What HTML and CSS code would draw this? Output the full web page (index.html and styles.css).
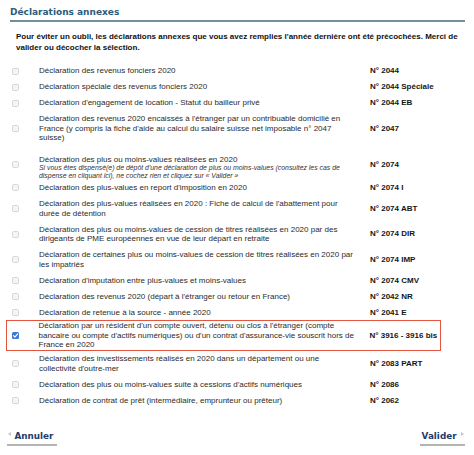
FILE: index.html
```html
<!DOCTYPE html>
<html lang="fr">
<head>
<meta charset="utf-8">
<title>Déclarations annexes</title>
<link rel="stylesheet" href="styles.css">
</head>
<body>
<div class="page">
  <h1 class="title">Déclarations annexes</h1>
  <p class="intro">Pour éviter un oubli, les déclarations annexes que vous avez remplies l'année dernière ont été précochées. Merci de valider ou décocher la sélection.</p>

  <div class="list">
    <div class="row"><span class="box"></span><span class="label">Déclaration des revenus fonciers 2020</span><span class="num">N° 2044</span></div>
    <div class="row"><span class="box"></span><span class="label">Déclaration spéciale des revenus fonciers 2020</span><span class="num">N° 2044 Spéciale</span></div>
    <div class="row"><span class="box"></span><span class="label">Déclaration d'engagement de location - Statut du bailleur privé</span><span class="num">N° 2044 EB</span></div>
    <div class="row"><span class="box"></span><span class="label">Déclaration des revenus 2020 encaissés à l'étranger par un contribuable domicilié en France (y compris la fiche d'aide au calcul du salaire suisse net imposable n° 2047 suisse)</span><span class="num">N° 2047</span></div>
    <div class="row row--note"><span class="box"></span><span class="label">Déclaration des plus ou moins-values réalisées en 2020<span class="note">Si vous êtes dispensé(e) de dépôt d'une déclaration de plus ou moins-values (consultez les cas de dispense en cliquant ici), ne cochez rien et cliquez sur « Valider »</span></span><span class="num">N° 2074</span></div>
    <div class="row"><span class="box"></span><span class="label">Déclaration des plus-values en report d'imposition en 2020</span><span class="num">N° 2074 I</span></div>
    <div class="row"><span class="box"></span><span class="label">Déclaration des plus-values réalisées en 2020 : Fiche de calcul de l'abattement pour durée de détention</span><span class="num">N° 2074 ABT</span></div>
    <div class="row"><span class="box"></span><span class="label">Déclaration des plus ou moins-values de cession de titres réalisées en 2020 par des dirigeants de PME européennes en vue de leur départ en retraite</span><span class="num">N° 2074 DIR</span></div>
    <div class="row"><span class="box"></span><span class="label">Déclaration de certaines plus ou moins-values de cession de titres réalisées en 2020 par les impatriés</span><span class="num">N° 2074 IMP</span></div>
    <div class="row"><span class="box"></span><span class="label">Déclaration d'imputation entre plus-values et moins-values</span><span class="num">N° 2074 CMV</span></div>
    <div class="row"><span class="box"></span><span class="label">Déclaration des revenus 2020 (départ à l'étranger ou retour en France)</span><span class="num">N° 2042 NR</span></div>
    <div class="row"><span class="box"></span><span class="label">Déclaration de retenue à la source - année 2020</span><span class="num">N° 2041 E</span></div>
    <div class="row row--alert"><span class="box box--checked"><svg viewBox="0 0 7 7" width="7" height="7"><path d="M1.4 3.7 L2.9 5.2 L5.7 1.9" fill="none" stroke="#fff" stroke-width="1.2" stroke-linecap="round" stroke-linejoin="round"/></svg></span><span class="label">Déclaration par un résident d'un compte ouvert, détenu ou clos à l'étranger (compte bancaire ou compte d'actifs numériques) ou d'un contrat d'assurance-vie souscrit hors de France en 2020</span><span class="num">N° 3916 - 3916 bis</span></div>
    <div class="row"><span class="box"></span><span class="label">Déclaration des investissements réalisés en 2020 dans un département ou une collectivité d'outre-mer</span><span class="num">N° 2083 PART</span></div>
    <div class="row"><span class="box"></span><span class="label">Déclaration des plus ou moins-values suite à cessions d'actifs numériques</span><span class="num">N° 2086</span></div>
    <div class="row"><span class="box"></span><span class="label">Déclaration de contrat de prêt (intermédiaire, emprunteur ou prêteur)</span><span class="num">N° 2062</span></div>
  </div>

  <div class="actions">
    <a class="btn btn--back" href="#"><span class="arrow arrow--left"></span>Annuler</a>
    <a class="btn btn--next" href="#">Valider<span class="arrow arrow--right"></span></a>
  </div>
</div>
</body>
</html>
```

FILE: styles.css
```css
html, body {
  margin: 0;
  padding: 0;
  background: #ffffff;
}

body {
  font-family: "Liberation Sans", Arial, sans-serif;
  color: #2b2b2b;
}

.page {
  width: 474px;
}

.title {
  margin: 0 9px 0 10px;
  padding: 6px 0 1.5px 0;
  font-family: "DejaVu Sans", Verdana, sans-serif;
  font-size: 9px;
  line-height: 12px;
  font-weight: bold;
  color: #2c5c7d;
  border-bottom: 2px solid #6f8f9b;
}

.intro {
  margin: 10.75px 0 0 16px;
  width: 452px;
  font-size: 8px;
  line-height: 10.5px;
  font-weight: bold;
  color: #111111;
}

.list {
  margin: 9.75px 0 0 6px;
  width: 435px;
}

.row {
  display: grid;
  grid-template-columns: 33px 331px 1fr;
  align-items: center;
  padding: 3.25px 0;
  font-size: 8px;
  line-height: 9.5px;
  box-sizing: border-box;
}

.row--note {
  padding-bottom: 0;
}

.row--note .label {
  padding-top: 5.5px;
}

.row--alert {
  grid-template-columns: 31.5px 331px 1fr;
  border: 1.5px solid #e2553f;
  padding: 0;
}

.label {
  padding-right: 13px;
  color: #2b2b2b;
}

.note {
  display: block;
  font-style: italic;
  font-size: 6.9px;
  line-height: 7.75px;
  color: #333333;
}

.num {
  font-weight: bold;
  color: #151515;
  white-space: nowrap;
}

.box {
  display: block;
  width: 7px;
  height: 7px;
  margin-left: 6px;
  box-sizing: border-box;
  border: 1px solid #d6d6d6;
  border-radius: 1.5px;
  background: #f5f5f5;
}

.row--alert .box {
  margin-left: 5px;
}

.box--checked {
  border: none;
  background: #3a79d8;
}

.box--checked svg {
  display: block;
}

.actions {
  display: flex;
  justify-content: space-between;
  margin: 21.5px 9px 0 6.5px;
}

.btn {
  display: flex;
  align-items: center;
  font-family: "DejaVu Sans", Verdana, sans-serif;
  font-size: 8.8px;
  line-height: 12px;
  font-weight: bold;
  color: #1d3c6b;
  text-decoration: none;
  padding-bottom: 2.5px;
  border-bottom: 2px solid #b4b4b4;
}

.btn--back {
  padding-left: 1.5px;
  padding-right: 3.5px;
}

.btn--next {
  padding-left: 1.5px;
  padding-right: 1px;
}

.arrow {
  display: block;
  width: 0;
  height: 0;
  margin-top: -3px;
  border-top: 2.5px solid transparent;
  border-bottom: 2.5px solid transparent;
}

.arrow--left {
  border-right: 3.5px solid #c6c6c6;
  margin-right: 3.5px;
}

.arrow--right {
  border-left: 3.5px solid #c6c6c6;
  margin-left: 4.5px;
}
```
